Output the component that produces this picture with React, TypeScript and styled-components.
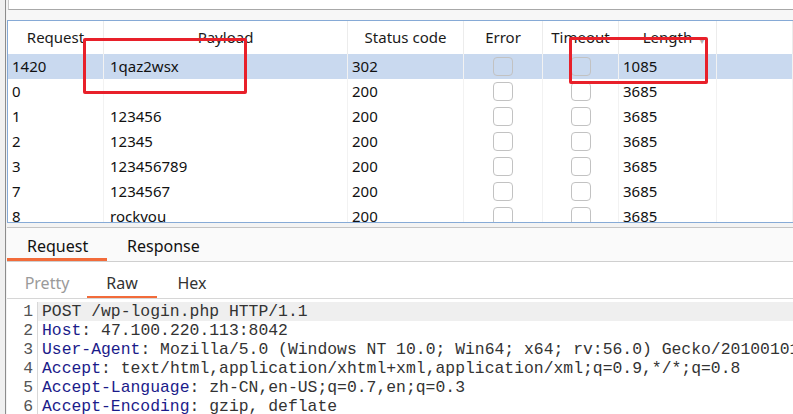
import React from "react";
import styled, { createGlobalStyle } from "styled-components";

const Global = createGlobalStyle`
  html, body { margin: 0; padding: 0; background: #f5f5f5; }
  body { width: 793px; height: 414px; overflow: hidden; font-family: "Noto Sans", "Segoe UI", sans-serif; }
`;

const Page = styled.div`
  position: relative;
  display: flex;
  width: 793px;
  height: 414px;
  overflow: hidden;
  background: #f3f3f3;
`;

const LeftStrip = styled.div`
  width: 5px;
  flex: none;
  background: #f0f0f0;
  border-right: 1px solid #8c8c8c;
`;

const Main = styled.div`
  flex: 1;
  display: flex;
  flex-direction: column;
  min-width: 0;
  padding-left: 1px;
  & > * { flex: none; }
`;

const TopField = styled.div`
  height: 9px;
  background: #ffffff;
  border-left: 1px solid #c8c8c8;
  border-bottom: 1px solid #a8a8a8;
  margin-left: 1px;
`;

const TopGap = styled.div`
  height: 10px;
  background: #f7f7f7;
`;

const TablePanel = styled.div`
  height: 201px;
  border-top: 1px solid #86aad6;
  border-left: 1px solid #86aad6;
  border-bottom: 1px solid #86aad6;
  background: #ffffff;
  overflow: hidden;
`;

const cols = [96, 244, 116, 79, 76, 98];
const gridCols = cols.map((c) => `${c}px`).join(" ") + " 1fr";

const HeaderRow = styled.div`
  display: grid;
  grid-template-columns: ${gridCols};
  height: 33px;
  font-size: 15px;
  color: #1a1a1a;
`;

const HeaderCell = styled.div`
  position: relative;
  display: flex;
  align-items: center;
  justify-content: center;
  border-right: 1px solid #ececec;
  padding-bottom: 2px;
`;

const SortMark = styled.span`
  position: absolute;
  right: 10px;
  top: 14px;
  font-size: 8px;
  color: #b0b0b0;
`;

const Row = styled.div<{ $sel?: boolean }>`
  display: grid;
  grid-template-columns: ${gridCols};
  height: 25px;
  font-size: 15px;
  color: #111;
  background: ${(p) => (p.$sel ? "#c9d9ef" : "#ffffff")};
`;

const Cell = styled.div<{ $pad?: number }>`
  display: flex;
  align-items: center;
  padding-left: ${(p) => p.$pad ?? 4}px;
  padding-bottom: 1px;
  border-right: 1px solid #f2f2f2;
  white-space: nowrap;
`;

const BoxCell = styled(Cell)`
  justify-content: center;
  padding-left: 0;
  padding-bottom: 0;
`;

const Check = styled.div`
  width: 18px;
  height: 17px;
  border: 1px solid #c2c2c2;
  border-radius: 4px;
  background: transparent;
`;

const Divider = styled.div`
  height: 4px;
  background: #f3f3f3;
  border-bottom: 1px solid #c4c4c4;
`;

const TabBar = styled.div`
  height: 33px;
  display: flex;
  background: #fafafa;
  border-bottom: 1px solid #cfcfcf;
`;

const Tab = styled.div<{ $active?: boolean; $w: number }>`
  width: ${(p) => p.$w}px;
  box-sizing: border-box;
  padding-left: 20px;
  display: flex;
  align-items: center;
  font-size: 16px;
  color: #111;
  border-bottom: 3px solid ${(p) => (p.$active ? "#f26b3a" : "transparent")};
  padding-top: 5px;
`;

const SubBar = styled.div`
  height: 36px;
  display: flex;
  background: #ffffff;
  border-bottom: 1px solid #d6d6d6;
`;

const SubTab = styled.div<{ $active?: boolean; $muted?: boolean; $w: number }>`
  width: ${(p) => p.$w}px;
  box-sizing: border-box;
  display: flex;
  align-items: center;
  justify-content: center;
  font-size: 16px;
  color: ${(p) => (p.$muted ? "#9a9a9a" : "#333")};
  border-bottom: 2px solid ${(p) => (p.$active ? "#f26b3a" : "transparent")};
  padding-top: 7px;
`;

const Code = styled.div`
  display: flex;
  flex-direction: column;
  background: #ffffff;
  font-family: "Liberation Mono", "Courier New", monospace;
  font-size: 16.4px;
  padding-top: 3px;
  flex: 1;
`;

const Line = styled.div`
  display: flex;
  height: 19px;
  line-height: 19px;
  white-space: pre;
`;

const Num = styled.span`
  width: 26px;
  flex: none;
  text-align: right;
  padding-right: 4px;
  color: #555;
  border-right: 1px solid #d8d8d8;
  background: #ffffff;
`;

const Text = styled.span<{ $hl?: boolean }>`
  flex: 1;
  padding-left: 4px;
  color: #333;
  background: ${(p) => (p.$hl ? "#efefef" : "#ffffff")};
`;

const Key = styled.span`
  color: #1b1b8a;
`;

const Mark = styled.div`
  position: absolute;
  border: 3px solid #e8202a;
  border-radius: 2px;
  box-sizing: border-box;
  pointer-events: none;
`;

const rows = [
  ["1420", "1qaz2wsx", "302", "1085"],
  ["0", "", "200", "3685"],
  ["1", "123456", "200", "3685"],
  ["2", "12345", "200", "3685"],
  ["3", "123456789", "200", "3685"],
  ["7", "1234567", "200", "3685"],
  ["8", "rockyou", "200", "3685"],
];

const code: [string, string][] = [
  ["", "POST /wp-login.php HTTP/1.1"],
  ["Host", " 47.100.220.113:8042"],
  ["User-Agent", " Mozilla/5.0 (Windows NT 10.0; Win64; x64; rv:56.0) Gecko/20100101 Firefox/56.0"],
  ["Accept", " text/html,application/xhtml+xml,application/xml;q=0.9,*/*;q=0.8"],
  ["Accept-Language", " zh-CN,en-US;q=0.7,en;q=0.3"],
  ["Accept-Encoding", " gzip, deflate"],
];

export default function App() {
  return (
    <>
      <Global />
      <Page>
        <LeftStrip />
        <Main>
          <TopField />
          <TopGap />
          <TablePanel>
            <HeaderRow>
              <HeaderCell>Request</HeaderCell>
              <HeaderCell>Payload</HeaderCell>
              <HeaderCell>Status code</HeaderCell>
              <HeaderCell>Error</HeaderCell>
              <HeaderCell>Timeout</HeaderCell>
              <HeaderCell>
                Length<SortMark>▼</SortMark>
              </HeaderCell>
              <HeaderCell />
            </HeaderRow>
            {rows.map((r, i) => (
              <Row key={i} $sel={i === 0}>
                <Cell>{r[0]}</Cell>
                <Cell $pad={6}>{r[1]}</Cell>
                <Cell>{r[2]}</Cell>
                <BoxCell>
                  <Check />
                </BoxCell>
                <BoxCell>
                  <Check />
                </BoxCell>
                <Cell>{r[3]}</Cell>
                <Cell />
              </Row>
            ))}
          </TablePanel>
          <Divider />
          <TabBar>
            <Tab $active $w={100}>Request</Tab>
            <Tab $w={120}>Response</Tab>
          </TabBar>
          <SubBar>
            <SubTab $muted $w={80}>Pretty</SubTab>
            <SubTab $active $w={70}>Raw</SubTab>
            <SubTab $w={70}>Hex</SubTab>
          </SubBar>
          <Code>
            {code.map(([k, v], i) => (
              <Line key={i}>
                <Num>{i + 1}</Num>
                <Text $hl={i === 0}>
                  {k ? (
                    <>
                      <Key>{k}</Key>:{v}
                    </>
                  ) : (
                    v
                  )}
                </Text>
              </Line>
            ))}
          </Code>
        </Main>
        <Mark style={{ left: 83, top: 38, width: 164, height: 56 }} />
        <Mark style={{ left: 569, top: 37, width: 139, height: 47 }} />
      </Page>
    </>
  );
}
